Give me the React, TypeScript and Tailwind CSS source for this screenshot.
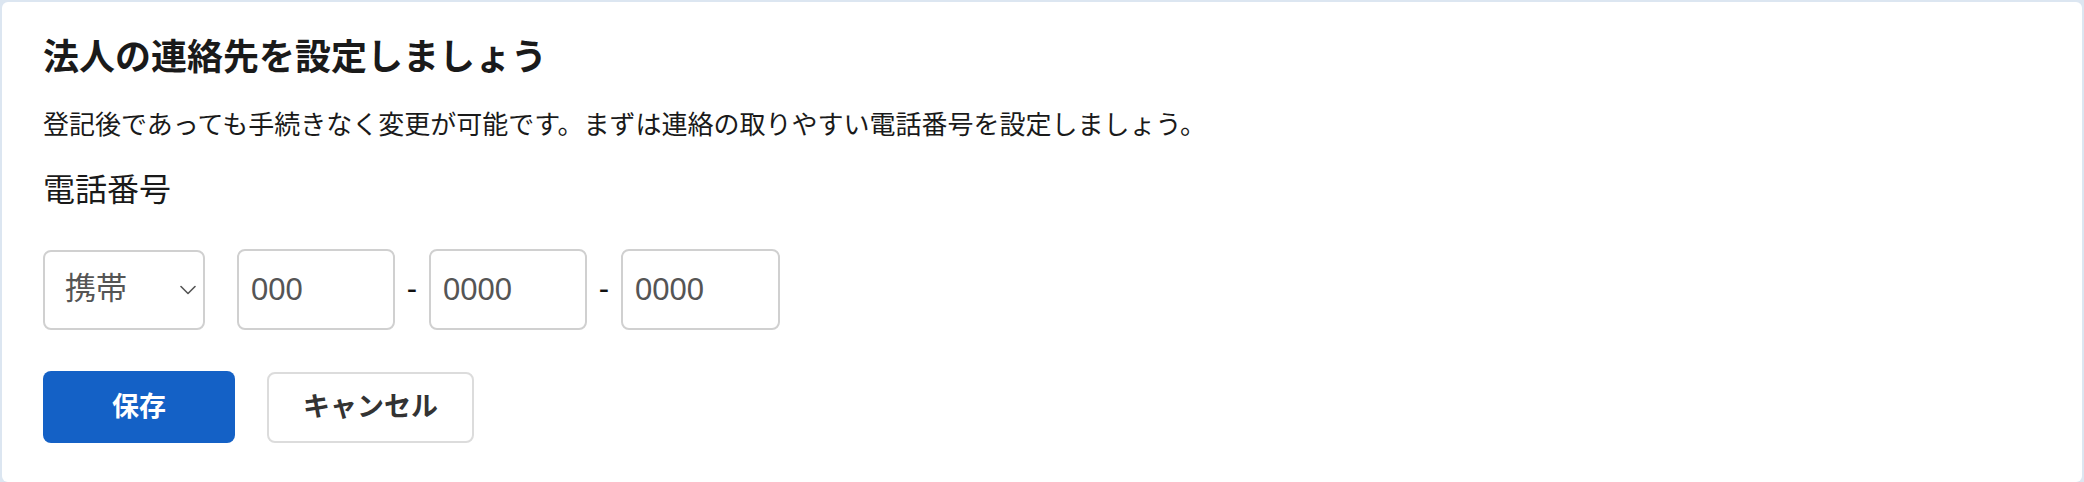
import React from "react";

const jp = { fontFamily: '"Liberation Sans", "Noto Sans CJK JP", sans-serif' };

function PhoneInput({ w, ph }: { w: string; ph: string }) {
  return (
    <input
      type="text"
      placeholder={ph}
      className={`${w} h-[81px] rounded-[8px] border-2 border-[#d0d0d0] bg-white pl-[12px] text-[31px] text-[#555] placeholder:text-[#555] outline-none`}
      style={jp}
    />
  );
}

export default function App() {
  return (
    <div className="w-[2084px] h-[482px] bg-[#dce6f1] pt-[2px] pl-[2px]" style={jp}>
      <div className="w-[2080px] h-[480px] rounded-[6px] bg-white pl-[41px] pt-[38px]">
        <h1 className="text-[36px] leading-[36px] font-bold text-[#1a1a1a]">法人の連絡先を設定しましょう</h1>
        <p className="mt-[36px] text-[26px] leading-[26px] text-[#1a1a1a]">
          登記後であっても手続きなく変更が可能です。まずは連絡の取りやすい電話番号を設定しましょう。
        </p>
        <div className="mt-[36px] text-[32px] leading-[32px] text-[#1a1a1a]">電話番号</div>
        <div className="mt-[43px] flex items-center">
          <div className="w-[162px] h-[80px] rounded-[8px] border-2 border-[#d0d0d0] bg-white flex items-center pl-[20px] pr-[7px]">
            <span className="text-[31px] text-[#555]">携帯</span>
            <svg className="ml-auto" width="16" height="10" viewBox="0 0 16 10" fill="none">
              <polyline points="1,1.5 8,8.5 15,1.5" stroke="#555" strokeWidth="1.6" strokeLinecap="round" strokeLinejoin="round" />
            </svg>
          </div>
          <div className="ml-[32px]">
            <PhoneInput w="w-[158px]" ph="000" />
          </div>
          <span className="w-[34px] text-center text-[31px] text-[#111]">-</span>
          <PhoneInput w="w-[158px]" ph="0000" />
          <span className="w-[34px] text-center text-[31px] text-[#111]">-</span>
          <PhoneInput w="w-[159px]" ph="0000" />
        </div>
        <div className="mt-[41px] flex items-center gap-[32px]">
          <button className="w-[192px] h-[72px] rounded-[8px] bg-[#1461c6] text-white text-[27px] font-bold">保存</button>
          <button className="w-[207px] h-[71px] rounded-[8px] border-2 border-[#dcdcdc] bg-white text-[#333] text-[27px] font-bold">キャンセル</button>
        </div>
      </div>
    </div>
  );
}
